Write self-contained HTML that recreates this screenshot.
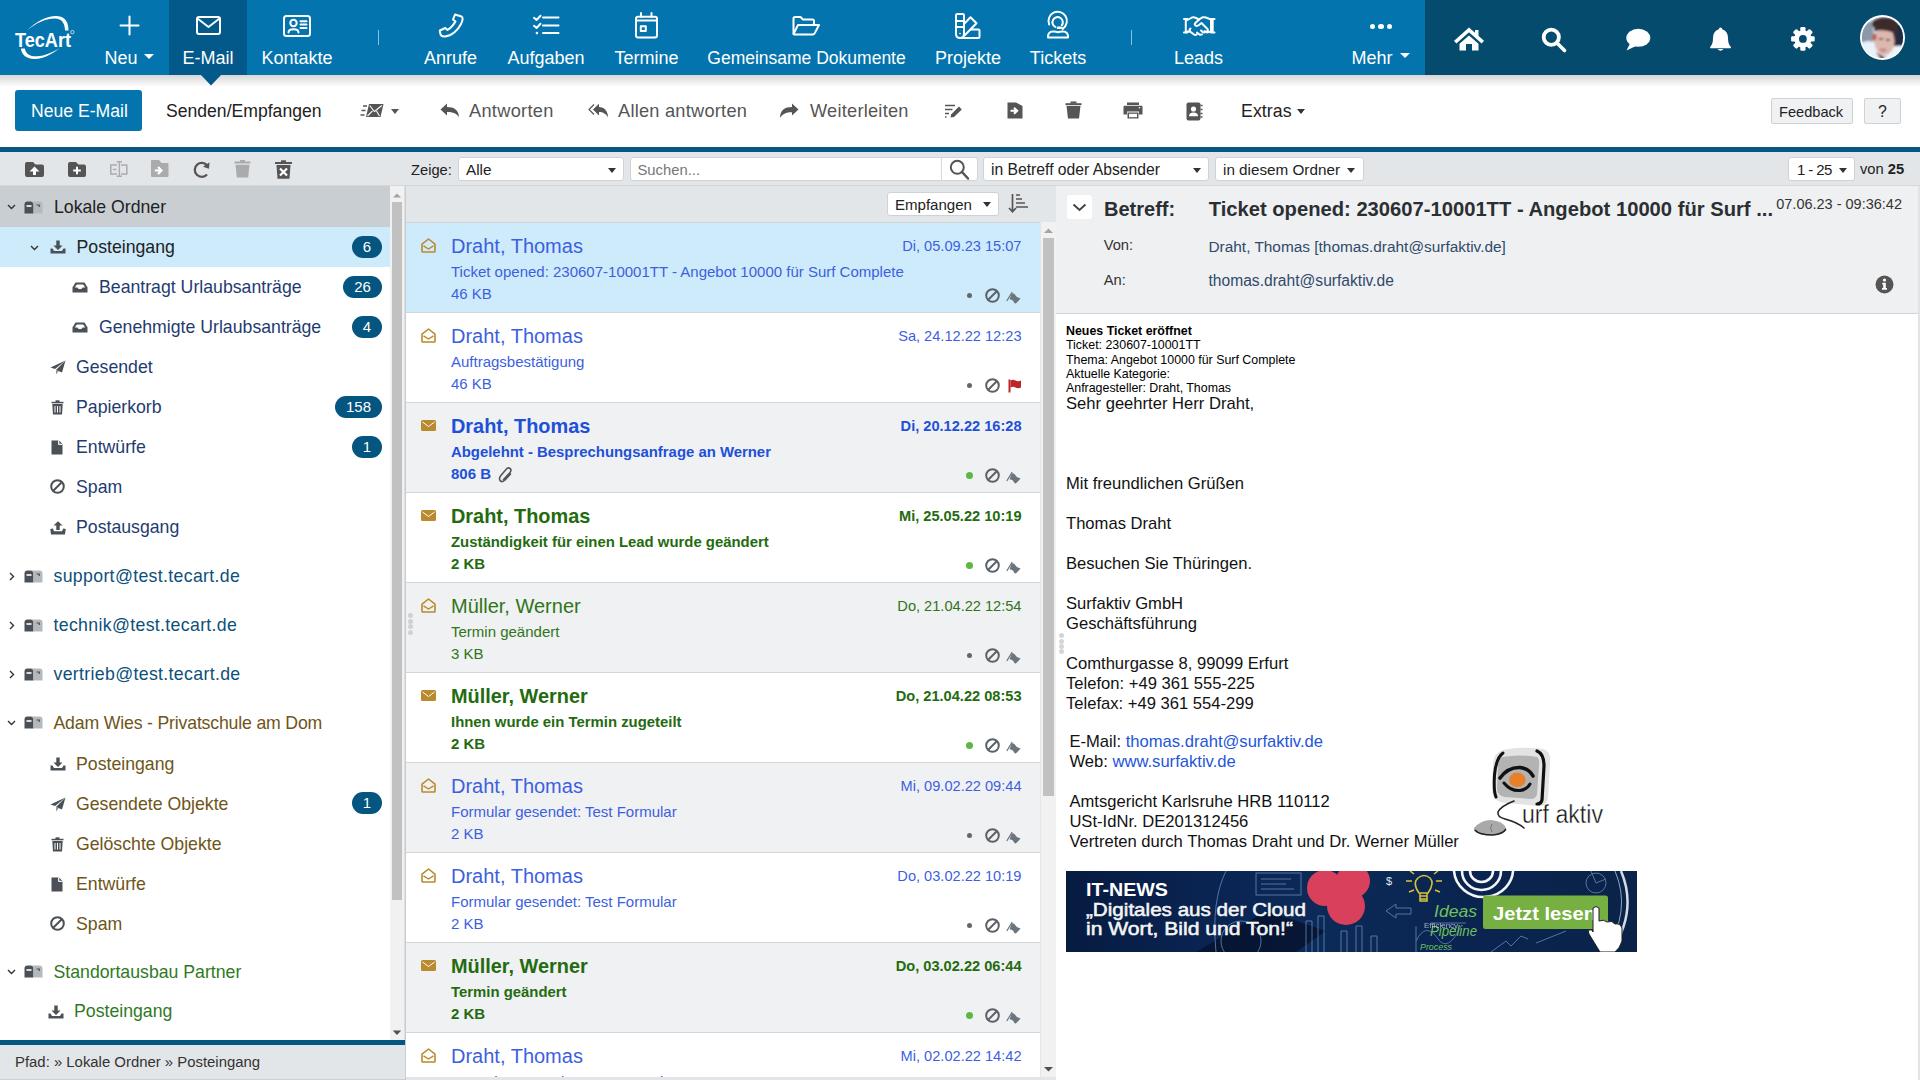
<!DOCTYPE html><html><head><meta charset="utf-8"><title>TecArt E-Mail</title><style>
*{box-sizing:border-box;margin:0;padding:0}
html,body{width:1920px;height:1080px;overflow:hidden;background:#fff;font-family:"Liberation Sans",sans-serif;color:#333}
.a{position:absolute}
svg{position:absolute;overflow:visible}
.nl{position:absolute;top:46.5px;width:240px;text-align:center;color:#fff;font-size:18px;line-height:22px;white-space:nowrap}
.t{position:absolute;white-space:nowrap;line-height:1}
.badge{position:absolute;height:22px;border-radius:11px;background:#04557f;color:#fff;font-size:15px;line-height:22px;text-align:center}
.sel{position:absolute;background:#fff;border:1px solid #cfd3d6;border-radius:3px}
.car{position:absolute;width:0;height:0;border-left:4.5px solid transparent;border-right:4.5px solid transparent;border-top:5px solid #333}
</style></head><body>
<div class="a" style="left:0px;top:0px;width:1920px;height:75px;background:#0474ae;"></div>
<div class="a" style="left:1425px;top:0px;width:495px;height:75px;background:#044b6d;"></div>
<div class="a" style="left:169px;top:0px;width:78px;height:75px;background:#03598a;"></div>
<svg style="left:0px;top:0px" width="80" height="65" viewBox="0 0 80 65">
<path d="M27 30.5C35 22 47 16 56 16C63 16 68.5 20 68.5 30.5L65 30.5C65 22 60.5 18.6 55 18.6C46 18.6 36 23 27 30.5Z" fill="#fff"/>
<path d="M21 48.5L24.8 48.5C26 54.5 30.5 56.6 37 56.3C45 56 53 52 60 48C53 53.5 44 58.8 35 59C27 59.2 21.3 55 21 48.5Z" fill="#fff"/>
<text x="15" y="46.8" font-family="Liberation Sans" font-weight="bold" font-size="20" fill="#fff" textLength="56" lengthAdjust="spacingAndGlyphs">TecArt</text>
<circle cx="72.4" cy="32.1" r="1.7" fill="none" stroke="#fff" stroke-width=".7"/>
</svg>
<div class="nl" style="left:1px">Neu</div>
<div class="car" style="left:144px;top:54px;border-top-color:#fff;border-left-width:5px;border-right-width:5px"></div>
<div class="nl" style="left:88px">E-Mail</div>
<div class="nl" style="left:177px">Kontakte</div>
<div class="nl" style="left:330.5px">Anrufe</div>
<div class="nl" style="left:426px">Aufgaben</div>
<div class="nl" style="left:526.5px">Termine</div>
<div class="nl" style="left:686.5px"><span style="font-size:17.5px">Gemeinsame Dokumente</span></div>
<div class="nl" style="left:848px">Projekte</div>
<div class="nl" style="left:938px">Tickets</div>
<div class="nl" style="left:1078.5px">Leads</div>
<div class="nl" style="left:1252px">Mehr</div>
<div class="car" style="left:1400px;top:53px;border-top-color:#fff;border-left-width:5px;border-right-width:5px;border-top-width:5px"></div>
<div class="a" style="left:378px;top:30px;width:1px;height:15px;background:#8cc0de;"></div>
<div class="a" style="left:1131px;top:30px;width:1px;height:15px;background:#8cc0de;"></div>
<svg style="left:120px;top:16px" width="19" height="19" viewBox="0 0 19 19"><path d="M9.5 0.5V18.5M0.5 9.5H18.5" fill="none" stroke="#fff" stroke-width="2" stroke-linecap="round" stroke-linejoin="round"/></svg>
<svg style="left:196px;top:16px" width="25" height="19" viewBox="0 0 25 19"><rect x="1" y="1" width="23" height="17" rx="2" fill="none" stroke="#fff" stroke-width="2" stroke-linecap="round" stroke-linejoin="round"/><path d="M1.5 2.5L12.5 11L23.5 2.5" fill="none" stroke="#fff" stroke-width="2" stroke-linecap="round" stroke-linejoin="round"/></svg>
<svg style="left:283px;top:15px" width="28" height="22" viewBox="0 0 28 22"><rect x="1" y="1" width="26" height="20" rx="2.5" fill="none" stroke="#fff" stroke-width="2" stroke-linecap="round" stroke-linejoin="round"/><circle cx="10.5" cy="8" r="3.2" fill="none" stroke="#fff" stroke-width="2" stroke-linecap="round" stroke-linejoin="round"/><path d="M5.5 17.5C5.5 13 15.5 13 15.5 17.5" fill="none" stroke="#fff" stroke-width="2" stroke-linecap="round" stroke-linejoin="round"/><path d="M17.5 6.3H23.5M17.5 9.6H23.5M17.5 13H23.5" fill="none" stroke="#fff" stroke-width="2" stroke-linecap="round" stroke-linejoin="round"/></svg>
<svg style="left:439px;top:13px" width="25" height="25" viewBox="0 0 25 25"><path d="M16 1.5L22.5 3.5C24 4.5 23.5 8 22 11C19 17 13 23 6 23.5C3 23.7 1.5 22.5 1.3 20.5L0.8 17.5L6.3 15L8.5 17C12 15 14.5 12 16.5 8.5L14 6.5Z" fill="none" stroke="#fff" stroke-width="2" stroke-linecap="round" stroke-linejoin="round"/></svg>
<svg style="left:533px;top:15px" width="27" height="21" viewBox="0 0 27 21"><path d="M1 2.8L3.5 5L7.5 0.8M1 10.8L3.5 13L7.5 8.8" fill="none" stroke="#fff" stroke-width="2" stroke-linecap="round" stroke-linejoin="round"/><circle cx="3.9" cy="18.1" r="1.3" fill="#fff"/><path d="M10 2.5H25.5M10 10.6H25.5M10 18.1H25.5" fill="none" stroke="#fff" stroke-width="2" stroke-linecap="round" stroke-linejoin="round"/></svg>
<svg style="left:635px;top:12px" width="23" height="27" viewBox="0 0 23 27"><rect x="1" y="4.8" width="21" height="20.7" rx="2" fill="none" stroke="#fff" stroke-width="2" stroke-linecap="round" stroke-linejoin="round"/><path d="M1.5 8.5H21.5M6 1V5M16.5 1V5" fill="none" stroke="#fff" stroke-width="2" stroke-linecap="round" stroke-linejoin="round"/><rect x="5.8" y="14.2" width="5" height="4.8" fill="none" stroke="#fff" stroke-width="2" stroke-linecap="round" stroke-linejoin="round"/></svg>
<svg style="left:792px;top:16px" width="30" height="20" viewBox="0 0 30 20"><path d="M1.5 17.5V2.5Q1.5 1 3 1H8.5L11 3.5H20.5Q22 3.5 22 5V8" fill="none" stroke="#fff" stroke-width="2" stroke-linecap="round" stroke-linejoin="round"/><path d="M1.5 18L6 9H27L22.5 17.6Q22 18.5 21 18.5H2.5Z" fill="none" stroke="#fff" stroke-width="2" stroke-linecap="round" stroke-linejoin="round"/></svg>
<svg style="left:955px;top:13px" width="27" height="26" viewBox="0 0 27 26"><path d="M1 2.3Q1 1 2.5 1H7.5Q9 1 9 2.3V21Q9 25 5 25Q1 25 1 21Z" fill="none" stroke="#fff" stroke-width="2" stroke-linecap="round" stroke-linejoin="round"/><path d="M1 8H9M1 14H9" fill="none" stroke="#fff" stroke-width="2" stroke-linecap="round" stroke-linejoin="round"/><path d="M9 11L15.5 4.3L21.5 10.3L9.5 22.5" fill="none" stroke="#fff" stroke-width="2" stroke-linecap="round" stroke-linejoin="round"/><path d="M16 16.5H23.5Q24.5 16.5 24.5 17.5V24Q24.5 25 23.5 25H5" fill="none" stroke="#fff" stroke-width="2" stroke-linecap="round" stroke-linejoin="round"/><circle cx="5" cy="20.5" r=".8" fill="#fff"/></svg>
<svg style="left:1047px;top:13px" width="23" height="26" viewBox="0 0 23 26"><path d="M2.2 11.5A9.2 9.2 0 1 1 15.8 15.6" fill="none" stroke="#fff" stroke-width="2" stroke-linecap="round" stroke-linejoin="round"/><path d="M8.2 13.9A5.2 5.2 0 1 1 14.8 12.4" fill="none" stroke="#fff" stroke-width="2" stroke-linecap="round" stroke-linejoin="round"/><rect x="9.6" y="13.4" width="4.4" height="2.5" rx="1.25" fill="#fff"/><path d="M13.5 14.6L15.8 15.6" fill="none" stroke="#fff" stroke-width="2" stroke-linecap="round" stroke-linejoin="round"/><path d="M1 24.5Q0.6 18.8 6 18.6Q9 18.5 11 19.3Q13 18.5 16 18.6Q21.4 18.8 21 24.5Z" fill="none" stroke="#fff" stroke-width="2" stroke-linecap="round" stroke-linejoin="round"/></svg>
<svg style="left:1183px;top:16px" width="33" height="20" viewBox="0 0 33 20"><path d="M1 3H4.5M1 16.5H4.5M2.8 3V16.5M28 3H31.5M28 16.5H31.5M29.7 3V16.5" fill="none" stroke="#fff" stroke-width="2" stroke-linecap="round" stroke-linejoin="round"/><path d="M4.5 4L9 1.5Q11 1 13 2L16 3.5L19 1.5Q21 0.8 23 1.5L28 3.5V15.5L24 16.5" fill="none" stroke="#fff" stroke-width="2" stroke-linecap="round" stroke-linejoin="round"/><path d="M16.5 3.3L12.5 6.8Q11 8.5 12.5 9.5Q14 10.5 16 9L18.5 7L24.5 13Q25.5 14.5 24 15.5Q22.5 16.5 21.5 15" fill="none" stroke="#fff" stroke-width="2" stroke-linecap="round" stroke-linejoin="round"/><path d="M4.5 15.5H7L11 18.5Q12.5 19.5 13.5 18.5M14 16.5L16.5 18.5Q18 19.2 19 18.3M18 14.5L20 16.2Q21.5 17 22.5 15.8" fill="none" stroke="#fff" stroke-width="2" stroke-linecap="round" stroke-linejoin="round"/><path d="M7 15.5Q6 13.5 7.5 12.5" fill="none" stroke="#fff" stroke-width="2" stroke-linecap="round" stroke-linejoin="round"/></svg>
<div class="a" style="left:1370.1000000000001px;top:24px;width:5.2px;height:5.2px;border-radius:50%;background:#fff"></div>
<div class="a" style="left:1378.4px;top:24px;width:5.2px;height:5.2px;border-radius:50%;background:#fff"></div>
<div class="a" style="left:1386.6000000000001px;top:24px;width:5.2px;height:5.2px;border-radius:50%;background:#fff"></div>
<svg style="left:1454px;top:27px" width="30" height="24" viewBox="0 0 30 24"><path d="M2.5 14L15 3L27.5 14" fill="none" stroke="#fff" stroke-width="3.6" stroke-linecap="square"/><path d="M21 3H24.5V9.5L21 6.5Z" fill="#fff"/><path d="M15 8.5L24.5 16.8V23.5H18V17H12V23.5H5.5V16.8Z" fill="#fff"/></svg>
<svg style="left:1541px;top:27px" width="26" height="25" viewBox="0 0 26 25"><circle cx="10.3" cy="10.3" r="7.6" fill="none" stroke="#fff" stroke-width="3.8"/><path d="M16 16L23.5 23.5" stroke="#fff" stroke-width="3.6" stroke-linecap="round"/></svg>
<svg style="left:1625px;top:28px" width="26" height="23" viewBox="0 0 26 23"><ellipse cx="13.3" cy="9.8" rx="12" ry="9" fill="#fff"/><path d="M5 15.5L1.5 22.5L11 18Z" fill="#fff"/></svg>
<svg style="left:1709px;top:26px" width="23" height="26" viewBox="0 0 23 26"><path d="M11.5 1.5Q13.2 1.5 13.2 3.3Q18.8 5 19 12Q19 18 21.5 20.5Q22.5 21.6 21.5 22.2H1.5Q0.5 21.6 1.5 20.5Q4 18 4 12Q4.2 5 9.8 3.3Q9.8 1.5 11.5 1.5Z" fill="#fff"/><path d="M8.5 23Q11.5 26.5 14.5 23Z" fill="#fff"/></svg>
<svg style="left:1791px;top:27px" width="24" height="24" viewBox="0 0 24 24"><g transform="translate(11.9,11.9)"><rect x="-2.6" y="-11.8" width="5.2" height="6" rx="1.2" fill="#fff" transform="rotate(0)"/><rect x="-2.6" y="-11.8" width="5.2" height="6" rx="1.2" fill="#fff" transform="rotate(45)"/><rect x="-2.6" y="-11.8" width="5.2" height="6" rx="1.2" fill="#fff" transform="rotate(90)"/><rect x="-2.6" y="-11.8" width="5.2" height="6" rx="1.2" fill="#fff" transform="rotate(135)"/><rect x="-2.6" y="-11.8" width="5.2" height="6" rx="1.2" fill="#fff" transform="rotate(180)"/><rect x="-2.6" y="-11.8" width="5.2" height="6" rx="1.2" fill="#fff" transform="rotate(225)"/><rect x="-2.6" y="-11.8" width="5.2" height="6" rx="1.2" fill="#fff" transform="rotate(270)"/><rect x="-2.6" y="-11.8" width="5.2" height="6" rx="1.2" fill="#fff" transform="rotate(315)"/><circle r="8.6" fill="#fff"/><circle r="3.9" fill="#044b6d"/></g></svg>
<svg style="left:1859px;top:14px" width="47" height="47" viewBox="0 0 47 47"><defs><clipPath id="avc"><circle cx="23.5" cy="23.5" r="20.6"/></clipPath><filter id="avb" x="-20%" y="-20%" width="140%" height="140%"><feGaussianBlur stdDeviation="1.1"/></filter></defs>
<circle cx="23.5" cy="23.5" r="22.5" fill="#fff"/>
<g clip-path="url(#avc)"><rect x="0" y="0" width="47" height="47" fill="#c9d6e3"/>
<g filter="url(#avb)">
<rect x="0" y="8" width="14" height="22" fill="#8c98a6"/>
<rect x="36" y="10" width="12" height="26" fill="#1f2a44"/>
<path d="M0 30Q10 24 18 30L22 47H0Z" fill="#e9f2fa"/>
<path d="M30 34Q40 30 47 33V47H26Z" fill="#eef5fb"/>
<ellipse cx="26" cy="10" rx="13" ry="6.5" fill="#3d2c2c"/>
<rect x="34" y="12" width="4" height="20" fill="#3d2c2c"/>
<ellipse cx="25.5" cy="27.5" rx="10" ry="13.5" fill="#dcb8ad"/>
<path d="M15 17Q16 12 22 12Q30 11 35 15L35 19Q26 15 15 17Z" fill="#3d2c2c"/>
<ellipse cx="15.5" cy="23" rx="2" ry="3.5" fill="#c05a4a"/>
<path d="M20 25H24M27 26H31" stroke="#5a3a3a" stroke-width="1.4"/>
<ellipse cx="24" cy="36" rx="3.5" ry="1.6" fill="#c97f86"/>
<path d="M17 38L22 46L26 44Z" fill="#8a2a22"/>
</g></g></svg>
<div class="a" style="left:0px;top:75px;width:1920px;height:72px;background:#fff;"></div>
<div class="a" style="left:0;top:75px;width:1920px;height:12px;background:linear-gradient(rgba(0,0,0,.16),rgba(0,0,0,0))"></div>
<svg style="left:199px;top:75px" width="24" height="12" viewBox="0 0 24 12"><path d="M2 0L12 10.5L22 0Z" fill="#03598a"/></svg>
<div class="a" style="left:15px;top:90px;width:127px;height:41px;background:#0474ae;border-radius:3px"></div>
<div class="t" style="left:31px;top:102.90px;font-size:17.6px;color:#fff;font-weight:normal;">Neue E-Mail</div>
<div class="t" style="left:166px;top:102.90px;font-size:17.6px;color:#222;font-weight:normal;">Senden/Empfangen</div>
<svg style="left:360px;top:103px" width="25" height="15" viewBox="0 0 25 15"><path d="M9 1H23.5L20.5 14H6Z" fill="#555"/><path d="M9.6 2.5L14.5 8.5L21.8 2.5M7.5 13L12.5 7.8M19.5 13L16.5 8" fill="none" stroke="#fff" stroke-width="1.1"/><path d="M3 3H7M1.5 7.5H5.5M0.5 12H4.5" stroke="#555" stroke-width="1.3"/></svg>
<div class="car" style="left:390.5px;top:109px;border-top-color:#555"></div>
<svg style="left:440px;top:103px" width="20" height="15" viewBox="0 0 20 15"><path d="M0.5 6.5L7 0.5V4C14 4 19 7 19 14.5C17 10.5 13 9 7 9V12.5Z" fill="#555"/></svg>
<div class="t" style="left:469px;top:102.39px;font-size:18.2px;color:#555;font-weight:normal;letter-spacing:.3px">Antworten</div>
<svg style="left:588px;top:103px" width="21" height="15" viewBox="0 0 21 15"><path d="M5 6.5L11 0.8V4C16 4.2 20 7.5 20 14.5C18.5 11 15 9 11 9V12.5Z" fill="#555"/><path d="M6 1.5L1 6.5L6 11.5" fill="none" stroke="#555" stroke-width="1.2"/></svg>
<div class="t" style="left:618px;top:102.39px;font-size:18.2px;color:#555;font-weight:normal;letter-spacing:.25px">Allen antworten</div>
<svg style="left:779px;top:103px" width="20" height="16" viewBox="0 0 20 16"><path d="M19.5 6.5L13 0.5V4C6 4 1 7 1 15C3 11 7 9.2 13 9.2V12.5Z" fill="#555"/></svg>
<div class="t" style="left:810px;top:102.39px;font-size:18.2px;color:#555;font-weight:normal;letter-spacing:.25px">Weiterleiten</div>
<svg style="left:944px;top:104px" width="19" height="14" viewBox="0 0 19 14"><path d="M1 1.5H11M1 5.5H8.5M1 9.5H5M1 13H2.5" stroke="#555" stroke-width="1.5"/><path d="M6.5 13.5L7.3 10.3L15 2.6L17.8 5.4L10 13Z" fill="#555"/></svg>
<svg style="left:1007px;top:102px" width="16" height="17" viewBox="0 0 16 17"><path d="M0.5 0.5H9L15.5 4V16.5H0.5Z" fill="#555"/><path d="M3.5 8.8H9.5M7 5.8L10.2 8.8L7 11.8" fill="none" stroke="#fff" stroke-width="2"/></svg>
<svg style="left:1065px;top:101px" width="17" height="18" viewBox="0 0 17 18"><path d="M0.5 2.2H16.5V4.2H0.5Z" fill="#555"/><path d="M5.5 0.5H11.5V2.5H5.5Z" fill="#555"/><path d="M1.5 5H15.5L14 17.5H3Z" fill="#555"/></svg>
<svg style="left:1123px;top:102px" width="20" height="17" viewBox="0 0 20 17"><path d="M4 0.5H16V3H4Z" fill="#555"/><path d="M1.5 3.8H18.5Q19.5 3.8 19.5 5V12.5H16V9.5H4V12.5H0.5V5Q0.5 3.8 1.5 3.8Z" fill="#555"/><path d="M4.5 10.5H15.5V16.5H4.5Z" fill="#555"/><path d="M6 11.8H14V15.2H6Z" fill="#fff"/><circle cx="16.5" cy="5.8" r=".8" fill="#fff"/></svg>
<svg style="left:1186px;top:102px" width="17" height="19" viewBox="0 0 17 19"><rect x="0.5" y="0.5" width="14" height="18" rx="2" fill="#555"/><path d="M14.5 3.5H16.5M14.5 7.5H16.5M14.5 11.5H16.5M14.5 15H16.5" stroke="#555" stroke-width="1.5"/><circle cx="7.5" cy="7" r="2.6" fill="#fff"/><path d="M3 14.2Q3 10.5 7.5 10.5Q12 10.5 12 14.2Z" fill="#fff"/></svg>
<div class="t" style="left:1241px;top:102.82px;font-size:17.7px;color:#222;font-weight:normal;letter-spacing:.1px">Extras</div>
<div class="car" style="left:1297px;top:109px;border-top-color:#333"></div>
<div class="a" style="left:1771px;top:98px;width:82px;height:26px;background:#f0f1f2;border:1px solid #cfd2d5;border-radius:2px"></div>
<div class="t" style="left:1779px;top:105.44px;font-size:14.6px;color:#222;font-weight:normal;">Feedback</div>
<div class="a" style="left:1864px;top:98px;width:37px;height:26px;background:#f0f1f2;border:1px solid #cfd2d5;border-radius:2px"></div>
<div class="t" style="left:1878px;top:104.43px;font-size:15.8px;color:#222;font-weight:normal;">?</div>
<div class="a" style="left:0px;top:147px;width:1920px;height:5px;background:#045782;"></div>
<div class="a" style="left:0px;top:152px;width:1920px;height:34px;background:#e3e6e9;"></div>
<div class="a" style="left:0px;top:185px;width:1920px;height:1px;background:#d4d8db;"></div>
<svg style="left:25px;top:162px" width="19" height="15" viewBox="0 0 19 15"><path d="M0 2Q0 0 2 0H8L10.5 2.5H17Q19 2.5 19 4.5V13Q19 15 17 15H2Q0 15 0 13Z" fill="#555"/><path d="M9.5 4.5L4.5 9.5H8V13H11V9.5H14.5Z" fill="#fff"/></svg>
<svg style="left:68px;top:162px" width="18" height="15" viewBox="0 0 18 15"><path d="M0 2Q0 0 2 0H8L10.5 2.5H16Q18 2.5 18 4.5V13Q18 15 16 15H2Q0 15 0 13Z" fill="#555"/><path d="M9 4.8V12.2M5.2 8.5H12.8" stroke="#fff" stroke-width="2"/></svg>
<svg style="left:110px;top:161px" width="18" height="16" viewBox="0 0 18 16"><path d="M7 4H0.8V13H7M11 4H16.8V13H11" fill="none" stroke="#a9abad" stroke-width="1.5"/><path d="M2.8 8.5H6.5" stroke="#a9abad" stroke-width="1.5"/><path d="M6.8 0.8H12M9.4 0.8V15.2M6.8 15.2H12" fill="none" stroke="#a9abad" stroke-width="1.4"/></svg>
<svg style="left:151px;top:160px" width="18" height="17" viewBox="0 0 18 17"><path d="M0 1Q0 0 1 0H8L10.5 3H16.5Q17.5 3 17.5 4V16Q17.5 17 16.5 17H1Q0 17 0 16Z" fill="#a9abad"/><path d="M3.8 10.5H9M7 7L10.5 10.5L7 14" fill="none" stroke="#fff" stroke-width="2.2"/></svg>
<svg style="left:193px;top:161px" width="17" height="17" viewBox="0 0 17 17"><path d="M14 13.5A7 7 0 1 1 14.3 4.5" fill="none" stroke="#555" stroke-width="2.3"/><path d="M16.5 1.2L16 7.8L10 5.8Z" fill="#555"/></svg>
<svg style="left:234px;top:160px" width="17" height="18" viewBox="0 0 17 18"><path d="M0.5 1.5H16.5V3.5H0.5Z" fill="#a9abad"/><path d="M6 0H11V2H6Z" fill="#a9abad"/><path d="M1.5 4.8H15.5L14.2 17.5H2.8Z" fill="#a9abad"/></svg>
<svg style="left:275px;top:160px" width="17" height="19" viewBox="0 0 17 19"><path d="M0 2H17V4H0Z" fill="#555"/><path d="M6 0.3H11V2H6Z" fill="#555"/><path d="M1.5 5H15.5L14.5 18.7H2.5Z" fill="#555"/><path d="M5 8.5L12 15.5M12 8.5L5 15.5" stroke="#fff" stroke-width="2.2"/></svg>
<div class="t" style="left:411px;top:163.36px;font-size:14.7px;color:#222;font-weight:normal;">Zeige:</div>
<div class="sel" style="left:458px;top:157px;width:166px;height:24px"></div>
<div class="t" style="left:466px;top:161.85px;font-size:15.3px;color:#222;font-weight:normal;">Alle</div>
<div class="car" style="left:608px;top:167.5px;border-top-color:#333"></div>
<div class="sel" style="left:630px;top:157px;width:348px;height:24px"></div>
<div class="a" style="left:941px;top:157px;width:1px;height:24px;background:#d6dadd;"></div>
<div class="t" style="left:637.5px;top:163.27px;font-size:14.8px;color:#777;font-weight:normal;">Suchen...</div>
<svg style="left:949px;top:159px" width="21" height="21" viewBox="0 0 21 21"><circle cx="8.3" cy="8.3" r="6.5" fill="none" stroke="#555" stroke-width="2"/><path d="M13 13L19 19.5" stroke="#555" stroke-width="2.5" stroke-linecap="round"/></svg>
<div class="sel" style="left:983px;top:157px;width:226px;height:24px"></div>
<div class="t" style="left:991px;top:161.51px;font-size:15.7px;color:#222;font-weight:normal;">in Betreff oder Absender</div>
<div class="car" style="left:1193px;top:167.5px;border-top-color:#333"></div>
<div class="sel" style="left:1215px;top:157px;width:149px;height:24px"></div>
<div class="t" style="left:1223px;top:161.89px;font-size:15.25px;color:#222;font-weight:normal;">in diesem Ordner</div>
<div class="car" style="left:1347px;top:167.5px;border-top-color:#333"></div>
<div class="sel" style="left:1788px;top:157px;width:67px;height:24px"></div>
<div class="t" style="left:1797px;top:162.10px;font-size:15px;color:#222;font-weight:normal;letter-spacing:-.6px">1 - 25</div>
<div class="car" style="left:1839px;top:167.5px;border-top-color:#333"></div>
<div class="t" style="left:1860px;top:162.36px;font-size:14.7px;color:#222;font-weight:normal;">von <b>25</b></div>
<div class="a" style="left:0px;top:186px;width:390px;height:854px;background:#fff;"></div>
<div class="a" style="left:0px;top:186px;width:390px;height:41px;background:#c9ced2;"></div>
<div class="a" style="left:0px;top:227px;width:390px;height:40px;background:#cdebfb;"></div>
<div class="a" style="left:390px;top:186px;width:15px;height:854px;background:#f1f1f1;"></div>
<div class="a" style="left:404px;top:186px;width:1px;height:854px;background:#dcdfe2;"></div>
<div class="a" style="left:392px;top:202px;width:10px;height:698px;background:#c1c1c1;"></div>
<svg style="left:392px;top:192px" width="10" height="6" viewBox="0 0 10 6"><path d="M1 5.5L5 1.5L9 5.5Z" fill="#a3a3a3"/></svg>
<svg style="left:392px;top:1030px" width="10" height="6" viewBox="0 0 10 6"><path d="M0.8 0.5L5 5L9.2 0.5Z" fill="#505050"/></svg>
<svg style="left:7px;top:204px" width="9" height="6" viewBox="0 0 9 6"><path d="M1 1L4.5 4.5L8 1" fill="none" stroke="#333" stroke-width="1.4"/></svg>
<svg style="left:24px;top:201px" width="19" height="13" viewBox="0 0 19 13"><path d="M0.5 3.5Q0.5 0.5 3.5 0.5H6.5Q9.5 0.5 9.5 3.5V12.5H0.5Z" fill="#4a5055"/><path d="M2.5 5H7.5" stroke="#fff" stroke-width="1.6"/><path d="M7 0.5H15.5Q18.5 0.5 18.5 3.5V12.5H9.5V3.5Q9.5 1.5 7 0.5Z" fill="#b5b9bc"/><path d="M12.5 4H15.3V6" fill="none" stroke="#4a5055" stroke-width="1.2"/></svg>
<div class="t" style="left:54px;top:198.82px;font-size:17.7px;color:#222;font-weight:normal;">Lokale Ordner</div>
<svg style="left:30px;top:245px" width="9" height="6" viewBox="0 0 9 6"><path d="M1 1L4.5 4.5L8 1" fill="none" stroke="#333" stroke-width="1.4"/></svg>
<svg style="left:50px;top:240px" width="16" height="14" viewBox="0 0 16 14"><path d="M6.3 0.5H9.7V5.5H12.5L8 10L3.5 5.5H6.3Z" fill="#4a5055"/><path d="M0.5 8.5L2.5 8.5L4 11H12L13.5 8.5H15.5V13.5H0.5Z" fill="#4a5055"/></svg>
<div class="t" style="left:76.5px;top:238.82px;font-size:17.7px;color:#222;font-weight:normal;">Posteingang</div>
<div class="badge" style="left:352px;top:236px;width:30px">6</div>
<svg style="left:72px;top:282px" width="16" height="11" viewBox="0 0 16 11"><path d="M3.5 0.5H12.5L15.5 5.5V10.5H0.5V5.5Z" fill="#4a5055"/><path d="M2.8 5.5L4.8 2.5H11.2L13.2 5.5H10.5L9.5 7H6.5L5.5 5.5Z" fill="#fff"/></svg>
<div class="t" style="left:99px;top:278.82px;font-size:17.7px;color:#1f3b70;font-weight:normal;">Beantragt Urlaubsanträge</div>
<div class="badge" style="left:343px;top:276px;width:39px">26</div>
<svg style="left:72px;top:322px" width="16" height="11" viewBox="0 0 16 11"><path d="M3.5 0.5H12.5L15.5 5.5V10.5H0.5V5.5Z" fill="#4a5055"/><path d="M2.8 5.5L4.8 2.5H11.2L13.2 5.5H10.5L9.5 7H6.5L5.5 5.5Z" fill="#fff"/></svg>
<div class="t" style="left:99px;top:318.82px;font-size:17.7px;color:#1f3b70;font-weight:normal;">Genehmigte Urlaubsanträge</div>
<div class="badge" style="left:352px;top:316px;width:30px">4</div>
<svg style="left:50px;top:360px" width="16" height="15" viewBox="0 0 16 15"><path d="M15.5 0.5L0.5 7.5L5 9L15.5 0.5Z" fill="#4a5055"/><path d="M15.5 0.5L6 10L12 12.5Z" fill="#4a5055"/><path d="M6 10V14.5L8.5 11.3Z" fill="#8f9599"/></svg>
<div class="t" style="left:76px;top:358.82px;font-size:17.7px;color:#1f3b70;font-weight:normal;">Gesendet</div>
<svg style="left:51px;top:400px" width="13" height="15" viewBox="0 0 13 15"><path d="M0.5 1.8H12.5V3.3H0.5Z" fill="#4a5055"/><path d="M4.5 0.3H8.5V2H4.5Z" fill="#4a5055"/><path d="M1.3 4H11.7L11 14.5H2Z" fill="#4a5055"/><path d="M4 6V12.5M6.5 6V12.5M9 6V12.5" stroke="#fff" stroke-width="1"/></svg>
<div class="t" style="left:76px;top:398.82px;font-size:17.7px;color:#1f3b70;font-weight:normal;">Papierkorb</div>
<div class="badge" style="left:335px;top:396px;width:47px">158</div>
<svg style="left:51px;top:440px" width="12" height="15" viewBox="0 0 12 15"><path d="M0.5 0.5H7.5L11.5 4.5V14.5H0.5Z" fill="#4a5055"/><path d="M7.5 0.5V4.5H11.5" fill="#fff" stroke="#fff" stroke-width="0.8"/><path d="M8.3 0.8V3.8H11.2Z" fill="#4a5055"/></svg>
<div class="t" style="left:76px;top:438.82px;font-size:17.7px;color:#1f3b70;font-weight:normal;">Entwürfe</div>
<div class="badge" style="left:352px;top:436px;width:30px">1</div>
<svg style="left:50px;top:479px" width="15" height="15" viewBox="0 0 15 15"><circle cx="7.5" cy="7.5" r="6.3" fill="none" stroke="#4a5055" stroke-width="2"/><path d="M12.0 3.0L3.0 12.0" stroke="#4a5055" stroke-width="2"/></svg>
<div class="t" style="left:76px;top:478.82px;font-size:17.7px;color:#1f3b70;font-weight:normal;">Spam</div>
<svg style="left:50px;top:521px" width="16" height="14" viewBox="0 0 16 14"><path d="M6.3 9H9.7V4.5H12.5L8 0.2L3.5 4.5H6.3Z" fill="#4a5055"/><path d="M0.3 8L2.8 7.5L4 10.2H12L13.2 7.5L15.7 8L15 13.5H1Z" fill="#4a5055"/></svg>
<div class="t" style="left:76px;top:518.82px;font-size:17.7px;color:#1f3b70;font-weight:normal;">Postausgang</div>
<svg style="left:9px;top:572px" width="6" height="9" viewBox="0 0 6 9"><path d="M1 1L4.5 4.5L1 8" fill="none" stroke="#333" stroke-width="1.4"/></svg>
<svg style="left:24px;top:570px" width="19" height="13" viewBox="0 0 19 13"><path d="M0.5 3.5Q0.5 0.5 3.5 0.5H6.5Q9.5 0.5 9.5 3.5V12.5H0.5Z" fill="#4a5055"/><path d="M2.5 5H7.5" stroke="#fff" stroke-width="1.6"/><path d="M7 0.5H15.5Q18.5 0.5 18.5 3.5V12.5H9.5V3.5Q9.5 1.5 7 0.5Z" fill="#b5b9bc"/><path d="M12.5 4H15.3V6" fill="none" stroke="#4a5055" stroke-width="1.2"/></svg>
<div class="t" style="left:53.5px;top:567.82px;font-size:17.7px;color:#0d5079;font-weight:normal;letter-spacing:.34px">support@test.tecart.de</div>
<svg style="left:9px;top:621px" width="6" height="9" viewBox="0 0 6 9"><path d="M1 1L4.5 4.5L1 8" fill="none" stroke="#333" stroke-width="1.4"/></svg>
<svg style="left:24px;top:619px" width="19" height="13" viewBox="0 0 19 13"><path d="M0.5 3.5Q0.5 0.5 3.5 0.5H6.5Q9.5 0.5 9.5 3.5V12.5H0.5Z" fill="#4a5055"/><path d="M2.5 5H7.5" stroke="#fff" stroke-width="1.6"/><path d="M7 0.5H15.5Q18.5 0.5 18.5 3.5V12.5H9.5V3.5Q9.5 1.5 7 0.5Z" fill="#b5b9bc"/><path d="M12.5 4H15.3V6" fill="none" stroke="#4a5055" stroke-width="1.2"/></svg>
<div class="t" style="left:53.5px;top:616.82px;font-size:17.7px;color:#0d5079;font-weight:normal;letter-spacing:.34px">technik@test.tecart.de</div>
<svg style="left:9px;top:670px" width="6" height="9" viewBox="0 0 6 9"><path d="M1 1L4.5 4.5L1 8" fill="none" stroke="#333" stroke-width="1.4"/></svg>
<svg style="left:24px;top:668px" width="19" height="13" viewBox="0 0 19 13"><path d="M0.5 3.5Q0.5 0.5 3.5 0.5H6.5Q9.5 0.5 9.5 3.5V12.5H0.5Z" fill="#4a5055"/><path d="M2.5 5H7.5" stroke="#fff" stroke-width="1.6"/><path d="M7 0.5H15.5Q18.5 0.5 18.5 3.5V12.5H9.5V3.5Q9.5 1.5 7 0.5Z" fill="#b5b9bc"/><path d="M12.5 4H15.3V6" fill="none" stroke="#4a5055" stroke-width="1.2"/></svg>
<div class="t" style="left:53.5px;top:665.82px;font-size:17.7px;color:#0d5079;font-weight:normal;letter-spacing:.34px">vertrieb@test.tecart.de</div>
<svg style="left:7px;top:720px" width="9" height="6" viewBox="0 0 9 6"><path d="M1 1L4.5 4.5L8 1" fill="none" stroke="#333" stroke-width="1.4"/></svg>
<svg style="left:24px;top:716px" width="19" height="13" viewBox="0 0 19 13"><path d="M0.5 3.5Q0.5 0.5 3.5 0.5H6.5Q9.5 0.5 9.5 3.5V12.5H0.5Z" fill="#4a5055"/><path d="M2.5 5H7.5" stroke="#fff" stroke-width="1.6"/><path d="M7 0.5H15.5Q18.5 0.5 18.5 3.5V12.5H9.5V3.5Q9.5 1.5 7 0.5Z" fill="#b5b9bc"/><path d="M12.5 4H15.3V6" fill="none" stroke="#4a5055" stroke-width="1.2"/></svg>
<div class="t" style="left:53.5px;top:715.12px;font-size:17.7px;color:#6e5518;font-weight:normal;letter-spacing:-.18px">Adam Wies - Privatschule am Dom</div>
<svg style="left:50px;top:757px" width="16" height="14" viewBox="0 0 16 14"><path d="M6.3 0.5H9.7V5.5H12.5L8 10L3.5 5.5H6.3Z" fill="#4a5055"/><path d="M0.5 8.5L2.5 8.5L4 11H12L13.5 8.5H15.5V13.5H0.5Z" fill="#4a5055"/></svg>
<div class="t" style="left:76px;top:755.82px;font-size:17.7px;color:#6e5518;font-weight:normal;">Posteingang</div>
<svg style="left:50px;top:797px" width="16" height="15" viewBox="0 0 16 15"><path d="M15.5 0.5L0.5 7.5L5 9L15.5 0.5Z" fill="#4a5055"/><path d="M15.5 0.5L6 10L12 12.5Z" fill="#4a5055"/><path d="M6 10V14.5L8.5 11.3Z" fill="#8f9599"/></svg>
<div class="t" style="left:76px;top:795.82px;font-size:17.7px;color:#6e5518;font-weight:normal;">Gesendete Objekte</div>
<div class="badge" style="left:352px;top:792px;width:30px">1</div>
<svg style="left:51px;top:837px" width="13" height="15" viewBox="0 0 13 15"><path d="M0.5 1.8H12.5V3.3H0.5Z" fill="#4a5055"/><path d="M4.5 0.3H8.5V2H4.5Z" fill="#4a5055"/><path d="M1.3 4H11.7L11 14.5H2Z" fill="#4a5055"/><path d="M4 6V12.5M6.5 6V12.5M9 6V12.5" stroke="#fff" stroke-width="1"/></svg>
<div class="t" style="left:76px;top:835.82px;font-size:17.7px;color:#6e5518;font-weight:normal;">Gelöschte Objekte</div>
<svg style="left:51px;top:877px" width="12" height="15" viewBox="0 0 12 15"><path d="M0.5 0.5H7.5L11.5 4.5V14.5H0.5Z" fill="#4a5055"/><path d="M7.5 0.5V4.5H11.5" fill="#fff" stroke="#fff" stroke-width="0.8"/><path d="M8.3 0.8V3.8H11.2Z" fill="#4a5055"/></svg>
<div class="t" style="left:76px;top:875.82px;font-size:17.7px;color:#6e5518;font-weight:normal;">Entwürfe</div>
<svg style="left:50px;top:916px" width="15" height="15" viewBox="0 0 15 15"><circle cx="7.5" cy="7.5" r="6.3" fill="none" stroke="#4a5055" stroke-width="2"/><path d="M12.0 3.0L3.0 12.0" stroke="#4a5055" stroke-width="2"/></svg>
<div class="t" style="left:76px;top:915.82px;font-size:17.7px;color:#6e5518;font-weight:normal;">Spam</div>
<svg style="left:7px;top:969px" width="9" height="6" viewBox="0 0 9 6"><path d="M1 1L4.5 4.5L8 1" fill="none" stroke="#333" stroke-width="1.4"/></svg>
<svg style="left:24px;top:965px" width="19" height="13" viewBox="0 0 19 13"><path d="M0.5 3.5Q0.5 0.5 3.5 0.5H6.5Q9.5 0.5 9.5 3.5V12.5H0.5Z" fill="#4a5055"/><path d="M2.5 5H7.5" stroke="#fff" stroke-width="1.6"/><path d="M7 0.5H15.5Q18.5 0.5 18.5 3.5V12.5H9.5V3.5Q9.5 1.5 7 0.5Z" fill="#b5b9bc"/><path d="M12.5 4H15.3V6" fill="none" stroke="#4a5055" stroke-width="1.2"/></svg>
<div class="t" style="left:53.5px;top:963.82px;font-size:17.7px;color:#2f7a1f;font-weight:normal;">Standortausbau Partner</div>
<svg style="left:48px;top:1005px" width="16" height="14" viewBox="0 0 16 14"><path d="M6.3 0.5H9.7V5.5H12.5L8 10L3.5 5.5H6.3Z" fill="#4a5055"/><path d="M0.5 8.5L2.5 8.5L4 11H12L13.5 8.5H15.5V13.5H0.5Z" fill="#4a5055"/></svg>
<div class="t" style="left:74px;top:1002.82px;font-size:17.7px;color:#2f7a1f;font-weight:normal;">Posteingang</div>
<div class="a" style="left:0px;top:1040px;width:406px;height:5px;background:#045782;"></div>
<div class="a" style="left:0px;top:1045px;width:406px;height:35px;background:#e3e6e9;"></div>
<div class="a" style="left:0px;top:1079px;width:406px;height:1px;background:#cdd1d5;"></div>
<div class="t" style="left:15px;top:1055.19px;font-size:14.9px;color:#333;font-weight:normal;">Pfad: » Lokale Ordner » Posteingang</div>
<div class="a" style="left:405px;top:186px;width:1px;height:894px;background:#c9cdd1;"></div>
<div class="a" style="left:406px;top:186px;width:650px;height:36px;background:#e3e6e9;"></div>
<div class="a" style="left:406px;top:222px;width:634px;height:1px;background:#d0d4d7;"></div>
<div class="sel" style="left:887px;top:192px;width:112px;height:24px"></div>
<div class="t" style="left:895px;top:197.05px;font-size:15.06px;color:#222;font-weight:normal;">Empfangen</div>
<div class="car" style="left:983px;top:202px;border-top-color:#333"></div>
<svg style="left:1008px;top:193px" width="21" height="20" viewBox="0 0 21 20"><path d="M4.5 1V18.5M1 15L4.5 18.8L8 15" fill="none" stroke="#555" stroke-width="1.7"/><path d="M8 2H12M8 6H14M8 10H17M8 14H20" stroke="#555" stroke-width="1.6"/></svg>
<div class="a" style="left:406px;top:222px;width:634px;height:855px;overflow:hidden">
<div class="a" style="left:0px;top:1px;width:634px;height:89px;background:#cdebfb"></div>
<div class="a" style="left:0px;top:90px;width:634px;height:1px;background:#d3d7da"></div>
<svg style="left:15px;top:16px" width="15" height="15" viewBox="0 0 15 15"><path d="M1 6.2L7.5 1L14 6.2V13.3Q14 14 13.3 14H1.7Q1 14 1 13.3Z" fill="none" stroke="#b98a2e" stroke-width="1.6" stroke-linejoin="round"/><path d="M2.5 7.8L7.5 11L12.5 7.8" fill="none" stroke="#b98a2e" stroke-width="1.4"/></svg>
<div class="t" style="left:45px;top:13.87px;font-size:20px;color:#3d5fdf;font-weight:normal;">Draht, Thomas</div>
<div class="t" style="right:18.5px;top:17.44px;font-size:14.6px;color:#3d5fdf;font-weight:normal">Di, 05.09.23 15:07</div>
<div class="t" style="left:45px;top:42.10px;font-size:15px;color:#3d5fdf;font-weight:normal;">Ticket opened: 230607-10001TT - Angebot 10000 für Surf Complete</div>
<div class="t" style="left:45px;top:63.60px;font-size:15px;color:#3d5fdf;font-weight:normal;">46 KB</div>
<svg style="left:557px;top:68px" width="13" height="13" viewBox="0 0 13 13"><circle cx="6.5" cy="5.5" r="2.5" fill="#666"/></svg>
<svg style="left:579px;top:66px" width="15" height="15" viewBox="0 0 15 15"><circle cx="7.5" cy="7.5" r="6.3" fill="none" stroke="#5b6167" stroke-width="2"/><path d="M11.8 3.2L3.2 11.8" stroke="#5b6167" stroke-width="2"/></svg>
<svg style="left:600px;top:68px" width="16" height="15" viewBox="0 0 16 15"><path d="M1 10.6L6 2.4" stroke="#6b757d" stroke-width="1.1" stroke-linecap="round"/><path d="M5.6 3.4Q8.2 3 9.6 5.4Q11 7.6 14.6 8.4L9.8 13.6Q8.3 13.8 7.6 11.6Q6.8 9.4 3.6 9.2Z" fill="#6b757d"/></svg>
<div class="a" style="left:0px;top:91px;width:634px;height:89px;background:#ffffff"></div>
<div class="a" style="left:0px;top:180px;width:634px;height:1px;background:#d3d7da"></div>
<svg style="left:15px;top:106px" width="15" height="15" viewBox="0 0 15 15"><path d="M1 6.2L7.5 1L14 6.2V13.3Q14 14 13.3 14H1.7Q1 14 1 13.3Z" fill="none" stroke="#b98a2e" stroke-width="1.6" stroke-linejoin="round"/><path d="M2.5 7.8L7.5 11L12.5 7.8" fill="none" stroke="#b98a2e" stroke-width="1.4"/></svg>
<div class="t" style="left:45px;top:103.87px;font-size:20px;color:#3d5fdf;font-weight:normal;">Draht, Thomas</div>
<div class="t" style="right:18.5px;top:107.44px;font-size:14.6px;color:#3d5fdf;font-weight:normal">Sa, 24.12.22 12:23</div>
<div class="t" style="left:45px;top:132.10px;font-size:15px;color:#3d5fdf;font-weight:normal;">Auftragsbestätigung</div>
<div class="t" style="left:45px;top:153.60px;font-size:15px;color:#3d5fdf;font-weight:normal;">46 KB</div>
<svg style="left:557px;top:158px" width="13" height="13" viewBox="0 0 13 13"><circle cx="6.5" cy="5.5" r="2.5" fill="#666"/></svg>
<svg style="left:579px;top:156px" width="15" height="15" viewBox="0 0 15 15"><circle cx="7.5" cy="7.5" r="6.3" fill="none" stroke="#5b6167" stroke-width="2"/><path d="M11.8 3.2L3.2 11.8" stroke="#5b6167" stroke-width="2"/></svg>
<svg style="left:602px;top:157px" width="14" height="14" viewBox="0 0 14 14"><path d="M1.5 0.5V13.5" stroke="#c0242b" stroke-width="2"/><path d="M2.5 1.5Q5 0 7.5 1.5Q10 3 13 1.5V8.5Q10 10 7.5 8.5Q5 7 2.5 8.5Z" fill="#c0242b"/></svg>
<div class="a" style="left:0px;top:181px;width:634px;height:89px;background:#f0f1f3"></div>
<div class="a" style="left:0px;top:270px;width:634px;height:1px;background:#d3d7da"></div>
<svg style="left:15px;top:198px" width="15" height="11" viewBox="0 0 15 11"><rect x="0" y="0" width="15" height="11" rx="1.5" fill="#b98a2e"/><path d="M1.5 2L7.5 6.5L13.5 2" fill="none" stroke="#fff" stroke-width="1"/></svg>
<div class="t" style="left:45px;top:194.95px;font-size:19.9px;color:#2150d8;font-weight:bold;">Draht, Thomas</div>
<div class="t" style="right:18.5px;top:196.74px;font-size:14.6px;color:#2150d8;font-weight:bold">Di, 20.12.22 16:28</div>
<div class="t" style="left:45px;top:223.19px;font-size:14.9px;color:#2150d8;font-weight:bold;">Abgelehnt - Besprechungsanfrage an Werner</div>
<div class="t" style="left:45px;top:243.60px;font-size:15px;color:#2150d8;font-weight:bold;">806 B</div>
<svg style="left:93px;top:245px" width="14" height="16" viewBox="0 0 14 16"><path d="M4.5 12.5L11 5.5Q13 3 11 1.5Q9 0 7 2.5L1.5 9Q-0.5 12 1.5 14Q3.5 15.5 6 13L11.5 7" fill="none" stroke="#555" stroke-width="1.6" stroke-linecap="round"/></svg>
<svg style="left:557px;top:248px" width="13" height="13" viewBox="0 0 13 13"><circle cx="6.5" cy="5.5" r="3.5" fill="#5cb845"/></svg>
<svg style="left:579px;top:246px" width="15" height="15" viewBox="0 0 15 15"><circle cx="7.5" cy="7.5" r="6.3" fill="none" stroke="#5b6167" stroke-width="2"/><path d="M11.8 3.2L3.2 11.8" stroke="#5b6167" stroke-width="2"/></svg>
<svg style="left:600px;top:248px" width="16" height="15" viewBox="0 0 16 15"><path d="M1 10.6L6 2.4" stroke="#6b757d" stroke-width="1.1" stroke-linecap="round"/><path d="M5.6 3.4Q8.2 3 9.6 5.4Q11 7.6 14.6 8.4L9.8 13.6Q8.3 13.8 7.6 11.6Q6.8 9.4 3.6 9.2Z" fill="#6b757d"/></svg>
<div class="a" style="left:0px;top:271px;width:634px;height:89px;background:#ffffff"></div>
<div class="a" style="left:0px;top:360px;width:634px;height:1px;background:#d3d7da"></div>
<svg style="left:15px;top:288px" width="15" height="11" viewBox="0 0 15 11"><rect x="0" y="0" width="15" height="11" rx="1.5" fill="#b98a2e"/><path d="M1.5 2L7.5 6.5L13.5 2" fill="none" stroke="#fff" stroke-width="1"/></svg>
<div class="t" style="left:45px;top:284.95px;font-size:19.9px;color:#246b0f;font-weight:bold;">Draht, Thomas</div>
<div class="t" style="right:18.5px;top:286.74px;font-size:14.6px;color:#246b0f;font-weight:bold">Mi, 25.05.22 10:19</div>
<div class="t" style="left:45px;top:313.19px;font-size:14.9px;color:#246b0f;font-weight:bold;">Zuständigkeit für einen Lead wurde geändert</div>
<div class="t" style="left:45px;top:333.60px;font-size:15px;color:#246b0f;font-weight:bold;">2 KB</div>
<svg style="left:557px;top:338px" width="13" height="13" viewBox="0 0 13 13"><circle cx="6.5" cy="5.5" r="3.5" fill="#5cb845"/></svg>
<svg style="left:579px;top:336px" width="15" height="15" viewBox="0 0 15 15"><circle cx="7.5" cy="7.5" r="6.3" fill="none" stroke="#5b6167" stroke-width="2"/><path d="M11.8 3.2L3.2 11.8" stroke="#5b6167" stroke-width="2"/></svg>
<svg style="left:600px;top:338px" width="16" height="15" viewBox="0 0 16 15"><path d="M1 10.6L6 2.4" stroke="#6b757d" stroke-width="1.1" stroke-linecap="round"/><path d="M5.6 3.4Q8.2 3 9.6 5.4Q11 7.6 14.6 8.4L9.8 13.6Q8.3 13.8 7.6 11.6Q6.8 9.4 3.6 9.2Z" fill="#6b757d"/></svg>
<div class="a" style="left:0px;top:361px;width:634px;height:89px;background:#f0f1f3"></div>
<div class="a" style="left:0px;top:450px;width:634px;height:1px;background:#d3d7da"></div>
<svg style="left:15px;top:376px" width="15" height="15" viewBox="0 0 15 15"><path d="M1 6.2L7.5 1L14 6.2V13.3Q14 14 13.3 14H1.7Q1 14 1 13.3Z" fill="none" stroke="#b98a2e" stroke-width="1.6" stroke-linejoin="round"/><path d="M2.5 7.8L7.5 11L12.5 7.8" fill="none" stroke="#b98a2e" stroke-width="1.4"/></svg>
<div class="t" style="left:45px;top:373.87px;font-size:20px;color:#2f7519;font-weight:normal;">Müller, Werner</div>
<div class="t" style="right:18.5px;top:377.44px;font-size:14.6px;color:#2f7519;font-weight:normal">Do, 21.04.22 12:54</div>
<div class="t" style="left:45px;top:402.10px;font-size:15px;color:#2f7519;font-weight:normal;">Termin geändert</div>
<div class="t" style="left:45px;top:423.60px;font-size:15px;color:#2f7519;font-weight:normal;">3 KB</div>
<svg style="left:557px;top:428px" width="13" height="13" viewBox="0 0 13 13"><circle cx="6.5" cy="5.5" r="2.5" fill="#666"/></svg>
<svg style="left:579px;top:426px" width="15" height="15" viewBox="0 0 15 15"><circle cx="7.5" cy="7.5" r="6.3" fill="none" stroke="#5b6167" stroke-width="2"/><path d="M11.8 3.2L3.2 11.8" stroke="#5b6167" stroke-width="2"/></svg>
<svg style="left:600px;top:428px" width="16" height="15" viewBox="0 0 16 15"><path d="M1 10.6L6 2.4" stroke="#6b757d" stroke-width="1.1" stroke-linecap="round"/><path d="M5.6 3.4Q8.2 3 9.6 5.4Q11 7.6 14.6 8.4L9.8 13.6Q8.3 13.8 7.6 11.6Q6.8 9.4 3.6 9.2Z" fill="#6b757d"/></svg>
<div class="a" style="left:0px;top:451px;width:634px;height:89px;background:#ffffff"></div>
<div class="a" style="left:0px;top:540px;width:634px;height:1px;background:#d3d7da"></div>
<svg style="left:15px;top:468px" width="15" height="11" viewBox="0 0 15 11"><rect x="0" y="0" width="15" height="11" rx="1.5" fill="#b98a2e"/><path d="M1.5 2L7.5 6.5L13.5 2" fill="none" stroke="#fff" stroke-width="1"/></svg>
<div class="t" style="left:45px;top:464.95px;font-size:19.9px;color:#246b0f;font-weight:bold;">Müller, Werner</div>
<div class="t" style="right:18.5px;top:466.74px;font-size:14.6px;color:#246b0f;font-weight:bold">Do, 21.04.22 08:53</div>
<div class="t" style="left:45px;top:493.19px;font-size:14.9px;color:#246b0f;font-weight:bold;">Ihnen wurde ein Termin zugeteilt</div>
<div class="t" style="left:45px;top:513.60px;font-size:15px;color:#246b0f;font-weight:bold;">2 KB</div>
<svg style="left:557px;top:518px" width="13" height="13" viewBox="0 0 13 13"><circle cx="6.5" cy="5.5" r="3.5" fill="#5cb845"/></svg>
<svg style="left:579px;top:516px" width="15" height="15" viewBox="0 0 15 15"><circle cx="7.5" cy="7.5" r="6.3" fill="none" stroke="#5b6167" stroke-width="2"/><path d="M11.8 3.2L3.2 11.8" stroke="#5b6167" stroke-width="2"/></svg>
<svg style="left:600px;top:518px" width="16" height="15" viewBox="0 0 16 15"><path d="M1 10.6L6 2.4" stroke="#6b757d" stroke-width="1.1" stroke-linecap="round"/><path d="M5.6 3.4Q8.2 3 9.6 5.4Q11 7.6 14.6 8.4L9.8 13.6Q8.3 13.8 7.6 11.6Q6.8 9.4 3.6 9.2Z" fill="#6b757d"/></svg>
<div class="a" style="left:0px;top:541px;width:634px;height:89px;background:#f0f1f3"></div>
<div class="a" style="left:0px;top:630px;width:634px;height:1px;background:#d3d7da"></div>
<svg style="left:15px;top:556px" width="15" height="15" viewBox="0 0 15 15"><path d="M1 6.2L7.5 1L14 6.2V13.3Q14 14 13.3 14H1.7Q1 14 1 13.3Z" fill="none" stroke="#b98a2e" stroke-width="1.6" stroke-linejoin="round"/><path d="M2.5 7.8L7.5 11L12.5 7.8" fill="none" stroke="#b98a2e" stroke-width="1.4"/></svg>
<div class="t" style="left:45px;top:553.87px;font-size:20px;color:#3d5fdf;font-weight:normal;">Draht, Thomas</div>
<div class="t" style="right:18.5px;top:557.44px;font-size:14.6px;color:#3d5fdf;font-weight:normal">Mi, 09.02.22 09:44</div>
<div class="t" style="left:45px;top:582.10px;font-size:15px;color:#3d5fdf;font-weight:normal;">Formular gesendet: Test Formular</div>
<div class="t" style="left:45px;top:603.60px;font-size:15px;color:#3d5fdf;font-weight:normal;">2 KB</div>
<svg style="left:557px;top:608px" width="13" height="13" viewBox="0 0 13 13"><circle cx="6.5" cy="5.5" r="2.5" fill="#666"/></svg>
<svg style="left:579px;top:606px" width="15" height="15" viewBox="0 0 15 15"><circle cx="7.5" cy="7.5" r="6.3" fill="none" stroke="#5b6167" stroke-width="2"/><path d="M11.8 3.2L3.2 11.8" stroke="#5b6167" stroke-width="2"/></svg>
<svg style="left:600px;top:608px" width="16" height="15" viewBox="0 0 16 15"><path d="M1 10.6L6 2.4" stroke="#6b757d" stroke-width="1.1" stroke-linecap="round"/><path d="M5.6 3.4Q8.2 3 9.6 5.4Q11 7.6 14.6 8.4L9.8 13.6Q8.3 13.8 7.6 11.6Q6.8 9.4 3.6 9.2Z" fill="#6b757d"/></svg>
<div class="a" style="left:0px;top:631px;width:634px;height:89px;background:#ffffff"></div>
<div class="a" style="left:0px;top:720px;width:634px;height:1px;background:#d3d7da"></div>
<svg style="left:15px;top:646px" width="15" height="15" viewBox="0 0 15 15"><path d="M1 6.2L7.5 1L14 6.2V13.3Q14 14 13.3 14H1.7Q1 14 1 13.3Z" fill="none" stroke="#b98a2e" stroke-width="1.6" stroke-linejoin="round"/><path d="M2.5 7.8L7.5 11L12.5 7.8" fill="none" stroke="#b98a2e" stroke-width="1.4"/></svg>
<div class="t" style="left:45px;top:643.87px;font-size:20px;color:#3d5fdf;font-weight:normal;">Draht, Thomas</div>
<div class="t" style="right:18.5px;top:647.44px;font-size:14.6px;color:#3d5fdf;font-weight:normal">Do, 03.02.22 10:19</div>
<div class="t" style="left:45px;top:672.10px;font-size:15px;color:#3d5fdf;font-weight:normal;">Formular gesendet: Test Formular</div>
<div class="t" style="left:45px;top:693.60px;font-size:15px;color:#3d5fdf;font-weight:normal;">2 KB</div>
<svg style="left:557px;top:698px" width="13" height="13" viewBox="0 0 13 13"><circle cx="6.5" cy="5.5" r="2.5" fill="#666"/></svg>
<svg style="left:579px;top:696px" width="15" height="15" viewBox="0 0 15 15"><circle cx="7.5" cy="7.5" r="6.3" fill="none" stroke="#5b6167" stroke-width="2"/><path d="M11.8 3.2L3.2 11.8" stroke="#5b6167" stroke-width="2"/></svg>
<svg style="left:600px;top:698px" width="16" height="15" viewBox="0 0 16 15"><path d="M1 10.6L6 2.4" stroke="#6b757d" stroke-width="1.1" stroke-linecap="round"/><path d="M5.6 3.4Q8.2 3 9.6 5.4Q11 7.6 14.6 8.4L9.8 13.6Q8.3 13.8 7.6 11.6Q6.8 9.4 3.6 9.2Z" fill="#6b757d"/></svg>
<div class="a" style="left:0px;top:721px;width:634px;height:89px;background:#f0f1f3"></div>
<div class="a" style="left:0px;top:810px;width:634px;height:1px;background:#d3d7da"></div>
<svg style="left:15px;top:738px" width="15" height="11" viewBox="0 0 15 11"><rect x="0" y="0" width="15" height="11" rx="1.5" fill="#b98a2e"/><path d="M1.5 2L7.5 6.5L13.5 2" fill="none" stroke="#fff" stroke-width="1"/></svg>
<div class="t" style="left:45px;top:734.95px;font-size:19.9px;color:#246b0f;font-weight:bold;">Müller, Werner</div>
<div class="t" style="right:18.5px;top:736.74px;font-size:14.6px;color:#246b0f;font-weight:bold">Do, 03.02.22 06:44</div>
<div class="t" style="left:45px;top:763.19px;font-size:14.9px;color:#246b0f;font-weight:bold;">Termin geändert</div>
<div class="t" style="left:45px;top:783.60px;font-size:15px;color:#246b0f;font-weight:bold;">2 KB</div>
<svg style="left:557px;top:788px" width="13" height="13" viewBox="0 0 13 13"><circle cx="6.5" cy="5.5" r="3.5" fill="#5cb845"/></svg>
<svg style="left:579px;top:786px" width="15" height="15" viewBox="0 0 15 15"><circle cx="7.5" cy="7.5" r="6.3" fill="none" stroke="#5b6167" stroke-width="2"/><path d="M11.8 3.2L3.2 11.8" stroke="#5b6167" stroke-width="2"/></svg>
<svg style="left:600px;top:788px" width="16" height="15" viewBox="0 0 16 15"><path d="M1 10.6L6 2.4" stroke="#6b757d" stroke-width="1.1" stroke-linecap="round"/><path d="M5.6 3.4Q8.2 3 9.6 5.4Q11 7.6 14.6 8.4L9.8 13.6Q8.3 13.8 7.6 11.6Q6.8 9.4 3.6 9.2Z" fill="#6b757d"/></svg>
<div class="a" style="left:0px;top:811px;width:634px;height:89px;background:#ffffff"></div>
<div class="a" style="left:0px;top:900px;width:634px;height:1px;background:#d3d7da"></div>
<svg style="left:15px;top:826px" width="15" height="15" viewBox="0 0 15 15"><path d="M1 6.2L7.5 1L14 6.2V13.3Q14 14 13.3 14H1.7Q1 14 1 13.3Z" fill="none" stroke="#b98a2e" stroke-width="1.6" stroke-linejoin="round"/><path d="M2.5 7.8L7.5 11L12.5 7.8" fill="none" stroke="#b98a2e" stroke-width="1.4"/></svg>
<div class="t" style="left:45px;top:823.87px;font-size:20px;color:#3d5fdf;font-weight:normal;">Draht, Thomas</div>
<div class="t" style="right:18.5px;top:827.44px;font-size:14.6px;color:#3d5fdf;font-weight:normal">Mi, 02.02.22 14:42</div>
<div class="t" style="left:45px;top:852.10px;font-size:15px;color:#3d5fdf;font-weight:normal;">Formular gesendet: Test Formular</div>
<div class="t" style="left:45px;top:873.60px;font-size:15px;color:#3d5fdf;font-weight:normal;">2 KB</div>
<svg style="left:557px;top:878px" width="13" height="13" viewBox="0 0 13 13"><circle cx="6.5" cy="5.5" r="2.5" fill="#666"/></svg>
<svg style="left:579px;top:876px" width="15" height="15" viewBox="0 0 15 15"><circle cx="7.5" cy="7.5" r="6.3" fill="none" stroke="#5b6167" stroke-width="2"/><path d="M11.8 3.2L3.2 11.8" stroke="#5b6167" stroke-width="2"/></svg>
<svg style="left:600px;top:878px" width="16" height="15" viewBox="0 0 16 15"><path d="M1 10.6L6 2.4" stroke="#6b757d" stroke-width="1.1" stroke-linecap="round"/><path d="M5.6 3.4Q8.2 3 9.6 5.4Q11 7.6 14.6 8.4L9.8 13.6Q8.3 13.8 7.6 11.6Q6.8 9.4 3.6 9.2Z" fill="#6b757d"/></svg>
</div>
<div class="a" style="left:406px;top:1077px;width:650px;height:3px;background:#e3e6e9;"></div>
<div class="a" style="left:1040px;top:222px;width:16px;height:855px;background:#f1f1f1;"></div>
<div class="a" style="left:1040px;top:222px;width:1px;height:855px;background:#e3e6e9;"></div>
<div class="a" style="left:1043px;top:238px;width:11px;height:558px;background:#c1c1c1;"></div>
<svg style="left:1043px;top:227px" width="11" height="7" viewBox="0 0 11 7"><path d="M1 6L5.5 1.5L10 6Z" fill="#a3a3a3"/></svg>
<svg style="left:1043px;top:1066px" width="11" height="7" viewBox="0 0 11 7"><path d="M1 1L5.5 5.5L10 1Z" fill="#505050"/></svg>
<div class="a" style="left:408.4px;top:613.4px;width:5px;height:5px;border-radius:50%;background:#cfd2d5"></div>
<div class="a" style="left:408.4px;top:618.6px;width:5px;height:5px;border-radius:50%;background:#cfd2d5"></div>
<div class="a" style="left:408.4px;top:624.2px;width:5px;height:5px;border-radius:50%;background:#cfd2d5"></div>
<div class="a" style="left:408.4px;top:629.5px;width:5px;height:5px;border-radius:50%;background:#cfd2d5"></div>
<div class="a" style="left:1056px;top:186px;width:862px;height:127px;background:#eff0f2;"></div>
<div class="a" style="left:1056px;top:313px;width:862px;height:1px;background:#d0d4d7;"></div>
<div class="a" style="left:1056px;top:314px;width:862px;height:766px;background:#fff;"></div>
<div class="a" style="left:1918px;top:186px;width:2px;height:894px;background:#e1e4e7;"></div>
<div class="a" style="left:1067px;top:195px;width:25px;height:24px;background:#fff;border-radius:3px"></div>
<svg style="left:1072px;top:203px" width="15" height="9" viewBox="0 0 15 9"><path d="M1.5 1.5L7.5 7L13.5 1.5" fill="none" stroke="#444" stroke-width="2"/></svg>
<div class="t" style="left:1104px;top:198.87px;font-size:20px;color:#2b2f33;font-weight:bold;">Betreff:</div>
<div class="t" style="left:1208.7px;top:198.70px;font-size:20.2px;color:#2b2f33;font-weight:bold;">Ticket opened: 230607-10001TT - Angebot 10000 für Surf ...</div>
<div class="t" style="right:18px;top:197.03px;font-size:14.5px;color:#333;font-weight:normal;">07.06.23 - 09:36:42</div>
<div class="t" style="left:1103.7px;top:238.16px;font-size:14.7px;color:#333;font-weight:normal;">Von:</div>
<div class="t" style="left:1208.5px;top:238.76px;font-size:15.4px;color:#2f4a6b;font-weight:normal;">Draht, Thomas [thomas.draht@surfaktiv.de]</div>
<div class="t" style="left:1103.7px;top:273.16px;font-size:14.7px;color:#333;font-weight:normal;">An:</div>
<div class="t" style="left:1208.5px;top:273.29px;font-size:15.6px;color:#2f4a6b;font-weight:normal;">thomas.draht@surfaktiv.de</div>
<svg style="left:1875px;top:275px" width="19" height="19" viewBox="0 0 19 19"><circle cx="9.5" cy="9.5" r="9" fill="#555"/><circle cx="9.5" cy="5" r="1.6" fill="#fff"/><path d="M7.3 7.8H10.8V13H12V14.8H7V13H8.2V9.5H7.3Z" fill="#fff"/></svg>
<div class="a" style="left:1058.6px;top:633.4px;width:5px;height:5px;border-radius:50%;background:#d3d5d7"></div>
<div class="a" style="left:1058.6px;top:638.6px;width:5px;height:5px;border-radius:50%;background:#d3d5d7"></div>
<div class="a" style="left:1058.6px;top:644.2px;width:5px;height:5px;border-radius:50%;background:#d3d5d7"></div>
<div class="a" style="left:1058.6px;top:649.4px;width:5px;height:5px;border-radius:50%;background:#d3d5d7"></div>
<div class="t" style="left:1066px;top:325.40px;font-size:12.4px;color:#000;font-weight:bold;">Neues Ticket eröffnet</div>
<div class="t" style="left:1066px;top:339.20px;font-size:12.4px;color:#000;font-weight:normal;">Ticket: 230607-10001TT</div>
<div class="t" style="left:1066px;top:353.50px;font-size:12.4px;color:#000;font-weight:normal;">Thema: Angebot 10000 für Surf Complete</div>
<div class="t" style="left:1066px;top:367.50px;font-size:12.4px;color:#000;font-weight:normal;">Aktuelle Kategorie:</div>
<div class="t" style="left:1066px;top:381.50px;font-size:12.4px;color:#000;font-weight:normal;">Anfragesteller: Draht, Thomas</div>
<div class="t" style="left:1066px;top:396.25px;font-size:16.6px;color:#111;font-weight:normal;">Sehr geehrter Herr Draht,</div>
<div class="t" style="left:1066px;top:476.15px;font-size:16.6px;color:#111;font-weight:normal;">Mit freundlichen Grüßen</div>
<div class="t" style="left:1066px;top:516.15px;font-size:16.6px;color:#111;font-weight:normal;">Thomas Draht</div>
<div class="t" style="left:1066px;top:556.05px;font-size:16.6px;color:#111;font-weight:normal;">Besuchen Sie Thüringen.</div>
<div class="t" style="left:1066px;top:595.95px;font-size:16.6px;color:#111;font-weight:normal;">Surfaktiv GmbH</div>
<div class="t" style="left:1066px;top:615.95px;font-size:16.6px;color:#111;font-weight:normal;">Geschäftsführung</div>
<div class="t" style="left:1066px;top:656.05px;font-size:16.6px;color:#111;font-weight:normal;">Comthurgasse 8, 99099 Erfurt</div>
<div class="t" style="left:1066px;top:675.95px;font-size:16.6px;color:#111;font-weight:normal;">Telefon: +49 361 555-225</div>
<div class="t" style="left:1066px;top:695.85px;font-size:16.6px;color:#111;font-weight:normal;">Telefax: +49 361 554-299</div>
<div class="t" style="left:1069.4px;top:733.85px;font-size:16.6px;color:#111;font-weight:normal;">E-Mail: <span style="color:#2356d8">thomas.draht@surfaktiv.de</span></div>
<div class="t" style="left:1069.4px;top:753.75px;font-size:16.6px;color:#111;font-weight:normal;">Web: <span style="color:#2356d8">www.surfaktiv.de</span></div>
<div class="t" style="left:1069.4px;top:793.75px;font-size:16.6px;color:#111;font-weight:normal;">Amtsgericht Karlsruhe HRB 110112</div>
<div class="t" style="left:1069.4px;top:813.75px;font-size:16.6px;color:#111;font-weight:normal;">USt-IdNr. DE201312456</div>
<div class="t" style="left:1069.4px;top:833.75px;font-size:16.6px;color:#111;font-weight:normal;">Vertreten durch Thomas Draht und Dr. Werner Müller</div>
<svg style="left:1465px;top:740px" width="150" height="100" viewBox="0 0 150 100">
<path d="M38 10Q55 6 78 9Q86 11 85 22L83 58Q82 66 74 66L40 63Q28 62 27 50L28 24Q29 12 38 10Z" fill="#e3e3e3"/>
<path d="M37 17Q55 14 72 17Q75 19 74 26L72 54Q71 59 66 59L40 57Q32 56 32 48L33 26Q33 18 37 17Z" fill="#b3b3b3"/>
<path d="M38 13Q31 18 29.5 35Q28.5 52 31 57" fill="none" stroke="#111" stroke-width="3" stroke-linecap="round"/>
<path d="M72 11Q79 14 79 26L77 60Q76 64 72 64" fill="none" stroke="#111" stroke-width="3.2" stroke-linecap="round"/>
<path d="M35 38Q43 27 55 27.5Q64 28.5 68 36" fill="none" stroke="#111" stroke-width="3.6" stroke-linecap="round"/>
<path d="M39 43Q46 51.5 55 50.5Q62 49.5 65 44" fill="none" stroke="#111" stroke-width="3" stroke-linecap="round"/>
<ellipse cx="52.3" cy="39.8" rx="8.3" ry="7.3" fill="#e8802a"/>
<path d="M49 61Q36 66 33 72Q32 77 40 79Q52 82 59 88" fill="none" stroke="#222" stroke-width="1.6" stroke-linecap="round"/>
<path d="M9 88Q16 80 26 80Q38 81 41 88Q41 94 30 95Q14 96 9 91Z" fill="#a9a9a9"/>
<path d="M10 90Q14 95 28 95Q38 94 41 89" fill="none" stroke="#222" stroke-width="1.5"/>
<path d="M27 84Q24 88 27 92" fill="none" stroke="#777" stroke-width="1"/>
<text x="57" y="82.9" font-family="Liberation Sans" font-size="25" fill="#111" stroke="#fff" stroke-width="0.4" paint-order="normal" textLength="81" lengthAdjust="spacingAndGlyphs">urf aktiv</text>
</svg>
<div class="a" style="left:1066px;top:871px;width:571px;height:81px;overflow:hidden;background:linear-gradient(90deg,#061b40 0%,#0a2452 25%,#0c2a58 45%,#0a2450 70%,#0b2348 100%)">
<svg style="left:0;top:0" width="571" height="81" viewBox="0 0 571 81">
<path d="M130 81L200 40L260 60L230 81Z" fill="#05122c" opacity=".8"/>
<g fill="none" stroke="#6d8fbf" stroke-width="1" opacity=".75">
<path d="M160 0Q145 30 150 81"/>
<rect x="190" y="2" width="45" height="22"/>
<path d="M195 8H225M195 13H220M195 18H228"/>
<circle cx="175" cy="70" r="20"/>
<path d="M240 81V50H246V81M252 81V45H258V81M275 81V60H281V81M290 81V55H296V81M305 81V65H311V81"/>
<path d="M320 40L330 33V37H345V43H330V47Z"/>
<path d="M350 81V55M350 70Q360 50 372 68Q382 82 395 55"/>
<path d="M365 52H400"/>
<path d="M425 81L440 70L445 75L455 65L462 68"/>
<path d="M470 72L500 60"/>
<circle cx="530" cy="12" r="10"/>
<path d="M525 0L530 12L540 8"/>
<circle cx="525" cy="40" r="5"/>
</g>
<path d="M555 0Q572 40 545 81" fill="none" stroke="#d4dbe5" stroke-width="2.5"/>
<path d="M549 0Q566 40 539 81" fill="none" stroke="#8fa3bd" stroke-width="1"/>
<g fill="#d9405b">
<circle cx="259" cy="17" r="18"/><circle cx="287" cy="10" r="17"/><circle cx="280" cy="35" r="19"/>
</g>
<g fill="none" stroke="#f3f5f8" stroke-width="2.6">
<path d="M404 0A11.5 11 0 0 0 427 0"/>
<path d="M396 0A19.5 19 0 0 0 435 0"/>
<path d="M388 0A27.5 26 0 0 0 447 -4"/>
</g>
<g fill="none" stroke="#d9c23a" stroke-width="1.5">
<path d="M353 22Q346 12 352 7Q358 2 364 7Q369 12 362 22Z"/>
<path d="M354 22V30H361V22M354 25H361M354 28H361"/>
<path d="M340 10H346M370 10H376M343 21L348 19M374 21L369 19M344 0L348 3M372 0L368 3"/>
</g>
<text x="320" y="14" font-family="Liberation Sans" font-size="11" fill="#dfe6ef">$</text>
<text x="368" y="46" font-family="Liberation Sans" font-style="italic" font-size="16" fill="#6fc25a" textLength="43" lengthAdjust="spacingAndGlyphs">Ideas</text>
<text x="364" y="65" font-family="Liberation Sans" font-style="italic" font-size="15" fill="#6fc25a" textLength="47" lengthAdjust="spacingAndGlyphs">Pipeline</text>
<text x="354" y="79" font-family="Liberation Sans" font-style="italic" font-size="9" fill="#6fc25a" textLength="32" lengthAdjust="spacingAndGlyphs">Process</text>
<text x="358" y="57" font-family="Liberation Sans" font-size="8" fill="#c9d3e0" opacity=".8">Efficiency</text>
<text x="20" y="24.5" font-family="Liberation Sans" font-weight="bold" font-size="17.5" fill="#fff" textLength="82" lengthAdjust="spacingAndGlyphs">IT-NEWS</text>
<text x="20" y="44.8" font-family="Liberation Sans" font-size="18.5" fill="#f4f4f4" stroke="#f4f4f4" stroke-width="0.55" textLength="220" lengthAdjust="spacingAndGlyphs">„Digitales aus der Cloud</text>
<text x="20" y="64.3" font-family="Liberation Sans" font-size="18.5" fill="#f4f4f4" stroke="#f4f4f4" stroke-width="0.55" textLength="207" lengthAdjust="spacingAndGlyphs">in Wort, Bild und Ton!“</text>
<rect x="417" y="24.5" width="125" height="33.5" rx="2.5" fill="#77b042"/>
<text x="427" y="48.5" font-family="Liberation Sans" font-weight="bold" font-size="19" fill="#fff" textLength="103" lengthAdjust="spacingAndGlyphs">Jetzt lesen</text>
<path d="M527 37Q530 34 533 37V50Q538 48 541 51Q546 49 549 53Q554 52 556 57V70Q554 77 549 81H534L523 63Q521 58 526 59L527 61Z" fill="#fff" stroke="#1d1d1d" stroke-width="1"/>
</svg></div>
</body></html>
